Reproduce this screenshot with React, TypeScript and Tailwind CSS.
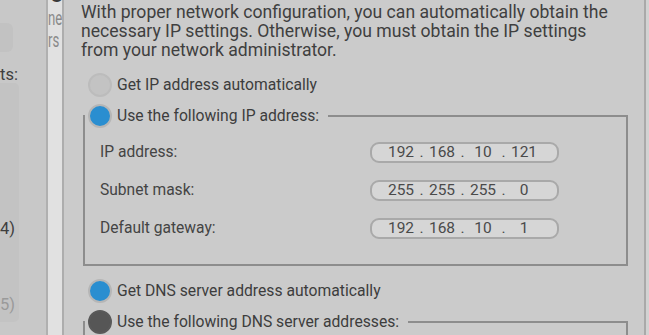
import React from "react";

type RadioKind = "off" | "on" | "dark";

function Radio({ kind }: { kind: RadioKind }) {
  if (kind === "on")
    return <span className="block w-[24px] h-[24px] shrink-0 rounded-full border-2 border-[#b6b6b6] bg-[#2a8ed0]" />;
  if (kind === "dark")
    return <span className="block w-[24px] h-[24px] shrink-0 rounded-full border-2 border-[#595959] bg-[#565656]" />;
  return <span className="block w-[24px] h-[24px] shrink-0 rounded-full border-2 border-[#bcbcbc] bg-[#c3c3c3]" />;
}

function IpField({ parts }: { parts: string[] }) {
  return (
    <div className="w-[189px] h-[21px] rounded-[9px] border-2 border-[#a9a9a9] bg-[#d6d6d6] flex items-center pl-[14px] text-[15.5px] leading-none text-[#4a4a4a]">
      {parts.map((p, i) => (
        <React.Fragment key={i}>
          <span className="w-[30px] text-center">{p}</span>
          {i < parts.length - 1 && <span className="w-[11px] text-center">.</span>}
        </React.Fragment>
      ))}
    </div>
  );
}

function FieldRow({ label, parts }: { label: string; parts: string[] }) {
  return (
    <div className="flex items-center h-[21px]">
      <span className="w-[270px] text-[15.6px] text-[#444444]">{label}</span>
      <IpField parts={parts} />
    </div>
  );
}

export default function App() {
  return (
    <div className="w-[649px] h-[335px] overflow-hidden flex bg-[#cbcbcb] font-['Roboto',sans-serif]">
      {/* left panel */}
      <div className="w-[46px] shrink-0 bg-[#c8c8c8] flex flex-col overflow-hidden">
        <div className="mt-[23px] w-[13px] h-[29px] rounded-r-[6px] bg-[#c2c2c2]" />
        <div className="mt-[13px] text-[16.5px] leading-[20px] text-[#3e3e3e] whitespace-nowrap">ts:</div>
        <div className="-mt-[2px] w-[19px] h-[239px] rounded-r-[5px] bg-[#c3c3c3] flex flex-col">
          <span className="mt-[136px] text-[16.5px] leading-[20px] text-[#3e3e3e] whitespace-nowrap">4)</span>
          <span className="mt-[56px] text-[16.5px] leading-[20px] text-[#9a9a9a] whitespace-nowrap">5)</span>
        </div>
      </div>
      {/* narrow strip */}
      <div className="w-[18px] shrink-0 border-l-2 border-r-2 border-l-[#b0b0b0] border-r-[#adadad] bg-[#e1e1e1] flex flex-col overflow-hidden">
        <span className="-mt-[15px] ml-[2px] h-[20px] text-[20px] leading-[20px] font-bold text-[#3a3a3a]">C</span>
        <span className="mt-[5px] text-[20px] leading-[16px] text-[#8a8a8a] scale-x-[0.66] origin-left whitespace-nowrap">ne</span>
        <span className="mt-[6px] text-[20px] leading-[16px] text-[#8a8a8a] scale-x-[0.66] origin-left whitespace-nowrap">rs</span>
      </div>
      {/* main */}
      <div className="w-[580px] shrink-0 pl-[17px] flex flex-col">
        <p className="pt-[3px] text-[17.6px] leading-[19px] text-[#3f3f3f] whitespace-nowrap">
          With proper network configuration, you can automatically obtain the
          <br />
          necessary IP settings. Otherwise, you must obtain the IP settings
          <br />
          from your network administrator.
        </p>
        <div className="mt-[13px] pl-[7px] flex items-center gap-[5px] h-[24px]">
          <Radio kind="off" />
          <span className="text-[15.7px] text-[#3d3d3d]">Get IP address automatically</span>
        </div>
        <fieldset className="mt-[7px] ml-[2px] w-[545px] border-2 border-[#8d8d8d]">
          <legend className="pl-[3px] pr-[9px]">
            <span className="flex items-center gap-[5px] h-[24px]">
              <Radio kind="on" />
              <span className="text-[15.7px] text-[#3d3d3d]">Use the following IP address:</span>
            </span>
          </legend>
          <div className="pt-[14px] pl-[15px] pb-[25px] flex flex-col gap-[17px]">
            <FieldRow label="IP address:" parts={["192", "168", "10", "121"]} />
            <FieldRow label="Subnet mask:" parts={["255", "255", "255", "0"]} />
            <FieldRow label="Default gateway:" parts={["192", "168", "10", "1"]} />
          </div>
        </fieldset>
        <div className="mt-[13px] pl-[7px] flex items-center gap-[5px] h-[24px]">
          <Radio kind="on" />
          <span className="text-[15.7px] text-[#3d3d3d]">Get DNS server address automatically</span>
        </div>
        <fieldset className="mt-[7px] ml-[2px] w-[545px] border-2 border-[#8d8d8d]">
          <legend className="pl-[3px] pr-[9px]">
            <span className="flex items-center gap-[5px] h-[24px]">
              <Radio kind="dark" />
              <span className="text-[15.7px] text-[#3d3d3d]">Use the following DNS server addresses:</span>
            </span>
          </legend>
          <div className="h-[60px]" />
        </fieldset>
      </div>
      {/* right edge */}
      <div className="w-[5px] shrink-0 border-l-2 border-[#a9a9a9] bg-[#d2d2d2]" />
    </div>
  );
}
